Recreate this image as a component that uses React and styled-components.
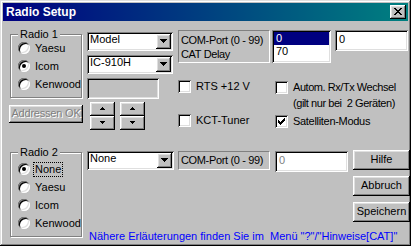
import React from 'react'
import styled, { createGlobalStyle } from 'styled-components'

const GlobalStyle = createGlobalStyle`
    html, body {
        margin: 0;
        padding: 0;
        background: #c0c0c0;
    }
    body {
        font-family: "Liberation Sans", Arial, sans-serif;
        font-size: 11px;
        color: #000000;
    }
    * {
        box-sizing: border-box;
    }
`

const raised = `
    box-shadow: inset -1px -1px 0 #000000, inset 1px 1px 0 #ffffff,
        inset -2px -2px 0 #808080, inset 2px 2px 0 #dfdfdf;
`

const sunken = `
    box-shadow: inset 1px 1px 0 #808080, inset -1px -1px 0 #ffffff,
        inset 2px 2px 0 #000000, inset -2px -2px 0 #dfdfdf;
`

const Window = styled.div`
    width: 411px;
    height: 246px;
    padding: 3px;
    background: #c0c0c0;
    box-shadow: inset -1px -1px 0 #000000, inset 1px 1px 0 #dfdfdf,
        inset -2px -2px 0 #808080, inset 2px 2px 0 #ffffff;
    display: flex;
    flex-direction: column;
    overflow: hidden;
`

const TitleBar = styled.div`
    height: 18px;
    flex: none;
    display: flex;
    align-items: center;
    justify-content: space-between;
    padding: 0 2px 0 3px;
    background: linear-gradient(to right, #000080, #008080);
    color: #ffffff;
    font-size: 12px;
    font-weight: bold;
`

const CloseButton = styled.div`
    width: 16px;
    height: 14px;
    background: #c0c0c0;
    ${raised}
    display: flex;
    align-items: center;
    justify-content: center;
    padding: 0 1px 1px 0;
`

const Body = styled.div`
    display: flex;
    flex-direction: column;
    padding: 9px 0 0 3px;
`

const Row = styled.div`
    display: flex;
    align-items: flex-start;
    padding-left: 3px;
    margin-top: ${p => p.$mt || 0}px;
`

const Column = styled.div`
    display: flex;
    flex-direction: column;
    align-items: flex-start;
    width: ${p => (p.$w ? `${p.$w}px` : 'auto')};
    margin-left: ${p => p.$ml || 0}px;
`

const Group = styled.div`
    width: 72px;
    height: ${p => p.$h}px;
    margin: ${p => p.$mt}px 0 0 1px;
    padding-left: 7px;
    border: 1px solid #808080;
    box-shadow: inset 1px 1px 0 #ffffff, 1px 1px 0 #ffffff;
    display: flex;
    flex-direction: column;
    align-items: flex-start;
`

const Legend = styled.span`
    margin-top: -7px;
    padding: 0 2px;
    line-height: 13px;
    background: #c0c0c0;
`

const RadioList = styled.div`
    display: flex;
    flex-direction: column;
    margin-top: ${p => p.$mt}px;
`

const RadioRow = styled.div`
    height: 18px;
    display: flex;
    align-items: center;
    gap: 5px;
`

const RadioCircle = styled.span`
    position: relative;
    width: 12px;
    height: 12px;
    flex: none;
    border-radius: 50%;
    background: #ffffff;
    box-shadow: inset 1px 1px 0 #808080, inset -1px -1px 0 #ffffff,
        inset 2px 2px 0 #000000, inset -2px -2px 0 #dfdfdf;
    &::after {
        content: '';
        display: ${p => (p.$on ? 'block' : 'none')};
        position: absolute;
        left: 4px;
        top: 4px;
        width: 4px;
        height: 4px;
        border-radius: 50%;
        background: #000000;
    }
`

const RadioLabel = styled.span`
    line-height: 13px;
    padding: 0 1px;
    margin-left: -1px;
    outline: ${p => (p.$focus ? '1px dotted #000000' : 'none')};
`

const Combo = styled.div`
    width: ${p => p.$w}px;
    height: 19px;
    margin-top: ${p => p.$mt || 0}px;
    padding: 2px;
    background: #ffffff;
    ${sunken}
    display: flex;
    align-items: center;
    justify-content: space-between;
`

const ComboText = styled.span`
    align-self: flex-start;
    margin-top: -1px;
    padding-left: 1px;
    line-height: 13px;
`

const FieldText = styled.span`
    padding-left: ${p => p.$pl || 1}px;
    line-height: 13px;
    color: ${p => (p.$muted ? '#808080' : '#000000')};
`

const DropButton = styled.div`
    width: 15px;
    height: 15px;
    flex: none;
    background: #c0c0c0;
    ${raised}
    display: flex;
    align-items: center;
    justify-content: center;
    padding: 0 1px 1px 0;
`

const Edit = styled.div`
    width: ${p => p.$w}px;
    height: ${p => p.$h || 21}px;
    margin-top: ${p => p.$mt || 0}px;
    margin-left: ${p => p.$ml || 0}px;
    padding: 3px 2px 0;
    background: ${p => (p.$gray ? '#c0c0c0' : '#ffffff')};
    ${sunken}
    display: flex;
    align-items: flex-start;
`

const SpinRow = styled.div`
    display: flex;
    gap: 5px;
    margin: 3px 0 0 3px;
`

const SpinPair = styled.div`
    display: flex;
    flex-direction: column;
`

const SpinButton = styled.div`
    width: 25px;
    height: 14px;
    background: #c0c0c0;
    ${raised}
    display: flex;
    align-items: center;
    justify-content: center;
    padding: 0 1px 1px 0;
`

const PushButton = styled.div`
    width: ${p => p.$w}px;
    height: ${p => p.$h}px;
    margin-top: ${p => p.$mt || 0}px;
    background: #c0c0c0;
    ${raised}
    display: flex;
    align-items: center;
    justify-content: center;
    padding-bottom: 1px;
    line-height: 13px;
    color: ${p => (p.$disabled ? '#808080' : '#000000')};
    text-shadow: ${p => (p.$disabled ? '1px 1px 0 #ffffff' : 'none')};
    letter-spacing: ${p => (p.$disabled ? '-0.2px' : 'normal')};
`

const StaticBox = styled.div`
    width: ${p => p.$w}px;
    height: ${p => p.$h}px;
    margin-left: ${p => p.$ml || 0}px;
    margin-top: ${p => p.$mt || 0}px;
    padding: ${p => p.$pt}px 2px 0;
    border-top: 1px solid #808080;
    border-left: 1px solid #808080;
    border-right: 1px solid #ffffff;
    border-bottom: 1px solid #ffffff;
    line-height: 14px;
    letter-spacing: -0.35px;
    white-space: nowrap;
`

const FieldRow = styled.div`
    display: flex;
    align-items: flex-start;
`

const ListBox = styled.div`
    width: 59px;
    height: 33px;
    padding: 2px;
    background: #ffffff;
    ${sunken}
    display: flex;
    flex-direction: column;
`

const ListItem = styled.div`
    height: 13px;
    line-height: 13px;
    padding-left: 2px;
    background: ${p => (p.$selected ? '#000080' : 'transparent')};
    color: ${p => (p.$selected ? '#ffffff' : '#000000')};
`

const CheckRow = styled.div`
    display: flex;
    align-items: flex-start;
    gap: 5px;
    margin: ${p => p.$mt}px 0 0 ${p => p.$ml || 0}px;
`

const CheckBox = styled.span`
    width: 13px;
    height: 13px;
    flex: none;
    background: #ffffff;
    ${sunken}
    display: flex;
    align-items: center;
    justify-content: center;
`

const CheckLabel = styled.div`
    display: flex;
    flex-direction: column;
    gap: 3px;
    line-height: 13px;
    white-space: pre;
    letter-spacing: ${p => p.$ls || 0}px;
`

const LowerRight = styled.div`
    display: flex;
    flex-direction: column;
    margin-left: 5px;
`

const ButtonColumn = styled.div`
    display: flex;
    flex-direction: column;
    gap: 6px;
    margin-left: 5px;
`

const Hint = styled.div`
    margin: 8px 0 0 2px;
    line-height: 13px;
    color: #0000ff;
    white-space: pre;
`

const Pixels = ({ w, h, rects }) => (
    <svg width={w} height={h} viewBox={`0 0 ${w} ${h}`} shapeRendering="crispEdges">
        {rects.map(([x, y, rw, rh], i) => (
            <rect key={i} x={x} y={y} width={rw} height={rh} fill="#000000" />
        ))}
    </svg>
)

const closeRects = [
    [0, 0, 2, 1], [6, 0, 2, 1],
    [1, 1, 2, 1], [5, 1, 2, 1],
    [2, 2, 4, 1],
    [3, 3, 2, 1],
    [2, 4, 4, 1],
    [1, 5, 2, 1], [5, 5, 2, 1],
    [0, 6, 2, 1], [6, 6, 2, 1],
]

const downRects = [[0, 0, 7, 1], [1, 1, 5, 1], [2, 2, 3, 1], [3, 3, 1, 1]]
const spinUpRects = [[2, 0, 1, 1], [1, 1, 3, 1], [0, 2, 5, 1]]
const spinDownRects = [[0, 0, 5, 1], [1, 1, 3, 1], [2, 2, 1, 1]]
const checkRects = [0, 1, 2, 3, 4, 5, 6].map(x => [x, [2, 3, 4, 3, 2, 1, 0][x], 1, 3])

const Radio = ({ label, on, focus }) => (
    <RadioRow>
        <RadioCircle $on={on} />
        <RadioLabel $focus={focus}>{label}</RadioLabel>
    </RadioRow>
)

const DropDown = ({ text, w, mt }) => (
    <Combo $w={w} $mt={mt}>
        <ComboText>{text}</ComboText>
        <DropButton>
            <Pixels w={7} h={4} rects={downRects} />
        </DropButton>
    </Combo>
)

const Check = ({ checked, mt, ml, ls, children }) => (
    <CheckRow $mt={mt} $ml={ml}>
        <CheckBox>{checked && <Pixels w={7} h={7} rects={checkRects} />}</CheckBox>
        <CheckLabel $ls={ls}>{children}</CheckLabel>
    </CheckRow>
)

const Spinner = () => (
    <SpinPair>
        <SpinButton>
            <Pixels w={5} h={3} rects={spinUpRects} />
        </SpinButton>
        <SpinButton>
            <Pixels w={5} h={3} rects={spinDownRects} />
        </SpinButton>
    </SpinPair>
)

const App = () => {
    return (
        <Window>
            <GlobalStyle />
            <TitleBar>
                <span>Radio Setup</span>
                <CloseButton>
                    <Pixels w={8} h={7} rects={closeRects} />
                </CloseButton>
            </TitleBar>

            <Body>
                <Row>
                    <Column $w={74}>
                        <Group $mt={4} $h={64}>
                            <Legend>Radio 1</Legend>
                            <RadioList $mt={-2}>
                                <Radio label="Yaesu" />
                                <Radio label="Icom" on />
                                <Radio label="Kenwood" />
                            </RadioList>
                        </Group>
                        <PushButton $w={74} $h={18} $mt={7} $disabled>
                            Addressen OK
                        </PushButton>
                    </Column>

                    <Column $w={86} $ml={4}>
                        <DropDown text="Model" w={86} mt={2} />
                        <DropDown text="IC-910H" w={86} mt={4} />
                        <Edit $w={72} $mt={4} $gray />
                        <SpinRow>
                            <Spinner />
                            <Spinner />
                        </SpinRow>
                    </Column>

                    <Column $w={92} $ml={5}>
                        <StaticBox $w={92} $h={33} $pt={2}>
                            COM-Port (0 - 99)
                            <br />
                            CAT Delay
                        </StaticBox>
                        <Check mt={17}>RTS +12 V</Check>
                        <Check mt={21}>KCT-Tuner</Check>
                    </Column>

                    <Column $ml={2}>
                        <FieldRow>
                            <ListBox>
                                <ListItem $selected>0</ListItem>
                                <ListItem>70</ListItem>
                            </ListBox>
                            <Edit $w={73} $ml={4}>
                                <FieldText $pl={2}>0</FieldText>
                            </Edit>
                        </FieldRow>
                        <Check mt={18} ml={3} ls={-0.45}>
                            <span>Autom. Rx/Tx Wechsel</span>
                            <span>{'(gilt nur bei  2 Geräten)'}</span>
                        </Check>
                        <Check mt={5} ml={3} ls={-0.3} checked>
                            Satelliten-Modus
                        </Check>
                    </Column>
                </Row>

                <Row $mt={20}>
                    <Group $mt={2} $h={85}>
                        <Legend>Radio 2</Legend>
                        <RadioList $mt={1}>
                            <Radio label="None" on focus />
                            <Radio label="Yaesu" />
                            <Radio label="Icom" />
                            <Radio label="Kenwood" />
                        </RadioList>
                    </Group>

                    <LowerRight>
                        <FieldRow>
                            <DropDown text="None" w={87} mt={1} />
                            <StaticBox $w={92} $h={19} $ml={4} $mt={1} $pt={1}>
                                COM-Port (0 - 99)
                            </StaticBox>
                            <Edit $w={73} $ml={5} $mt={1}>
                                <FieldText $pl={2} $muted>0</FieldText>
                            </Edit>
                            <ButtonColumn>
                                <PushButton $w={57} $h={20}>Hilfe</PushButton>
                                <PushButton $w={57} $h={20}>Abbruch</PushButton>
                                <PushButton $w={57} $h={20}>Speichern</PushButton>
                            </ButtonColumn>
                        </FieldRow>
                        <Hint>{'Nähere Erläuterungen finden Sie im  Menü "?"/"Hinweise[CAT]"'}</Hint>
                    </LowerRight>
                </Row>
            </Body>
        </Window>
    )
}

export default App
